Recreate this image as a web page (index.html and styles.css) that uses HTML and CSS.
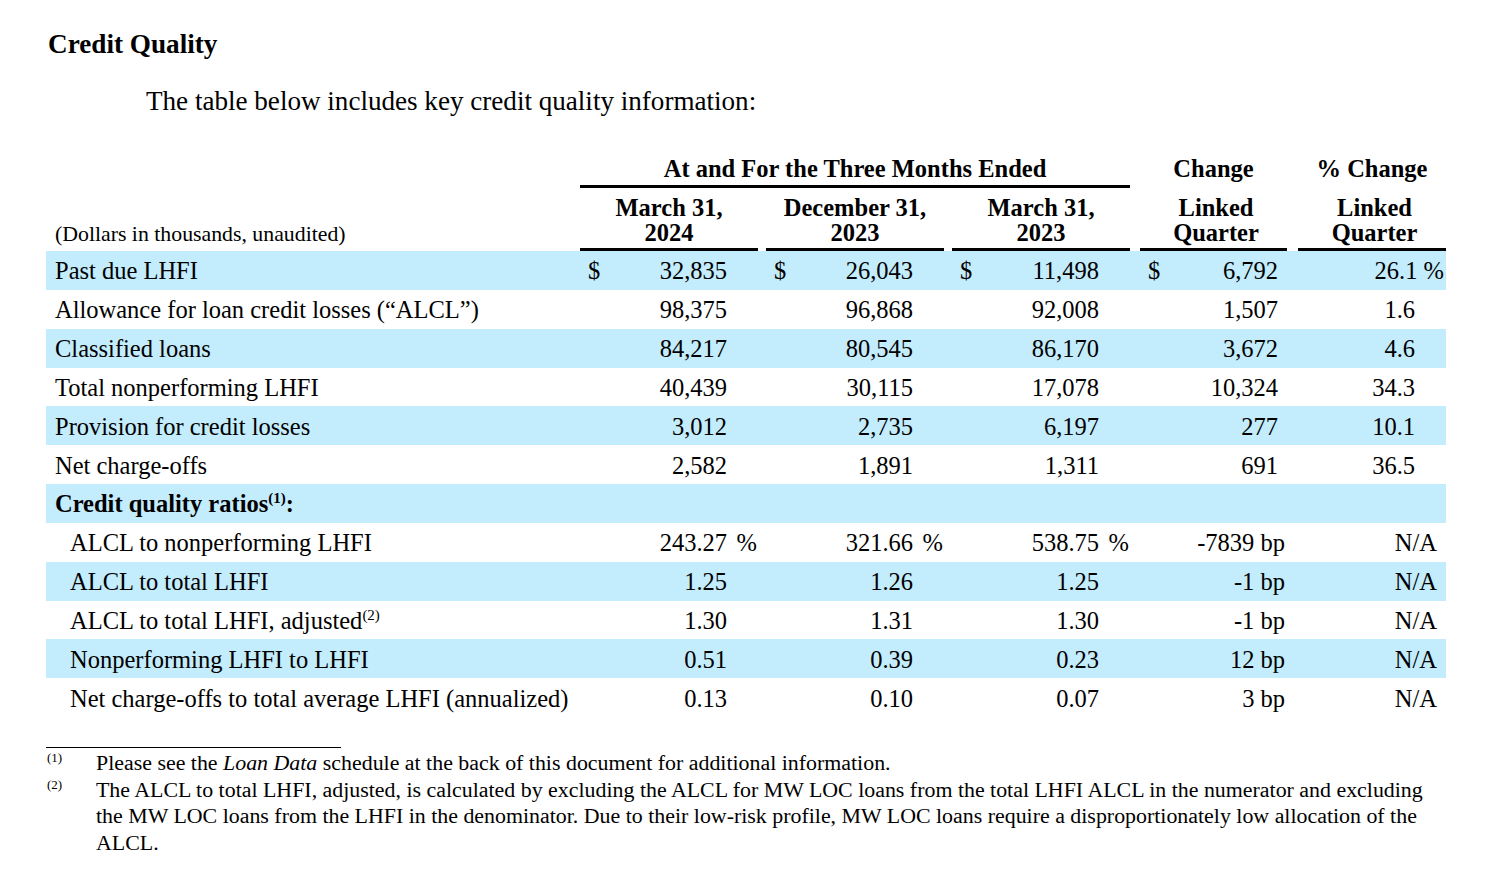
FILE: index.html
```html
<!DOCTYPE html>
<html lang="en">
<head>
<meta charset="utf-8">
<title>Credit Quality</title>
<link rel="stylesheet" href="styles.css">
</head>
<body>
<div class="page">
  <h1 class="title">Credit Quality</h1>
  <p class="intro">The table below includes key credit quality information:</p>

  <div class="table">
    <div class="row head1">
      <div class="h-group">At and For the Three Months Ended</div>
      <div class="h-plain c4">Change</div>
      <div class="h-plain c5">% Change</div>
    </div>
    <div class="row head2">
      <div class="lbl-units">(Dollars in thousands, unaudited)</div>
      <div class="h-col c1">March 31,<br>2024</div>
      <div class="h-col c2">December 31,<br>2023</div>
      <div class="h-col c3">March 31,<br>2023</div>
      <div class="h-col h-shift c4">Linked<br>Quarter</div>
      <div class="h-col h-shift c5">Linked<br>Quarter</div>
    </div>

    <div class="row data blue">
      <div class="lbl">Past due LHFI</div>
      <div class="val c1"><span class="cur">$</span><span class="num">32,835</span><span class="suf"></span></div>
      <div class="val c2"><span class="cur">$</span><span class="num">26,043</span><span class="suf"></span></div>
      <div class="val c3"><span class="cur">$</span><span class="num">11,498</span><span class="suf"></span></div>
      <div class="val c4"><span class="cur">$</span><span class="num">6,792</span><span class="suf s4"></span></div>
      <div class="val c5"><span class="num pct">26.1 %</span><span class="suf"></span></div>
    </div>
    <div class="row data">
      <div class="lbl">Allowance for loan credit losses (“ALCL”)</div>
      <div class="val c1"><span class="num">98,375</span><span class="suf"></span></div>
      <div class="val c2"><span class="num">96,868</span><span class="suf"></span></div>
      <div class="val c3"><span class="num">92,008</span><span class="suf"></span></div>
      <div class="val c4"><span class="num">1,507</span><span class="suf s4"></span></div>
      <div class="val c5"><span class="num">1.6</span><span class="suf"></span></div>
    </div>
    <div class="row data blue">
      <div class="lbl">Classified loans</div>
      <div class="val c1"><span class="num">84,217</span><span class="suf"></span></div>
      <div class="val c2"><span class="num">80,545</span><span class="suf"></span></div>
      <div class="val c3"><span class="num">86,170</span><span class="suf"></span></div>
      <div class="val c4"><span class="num">3,672</span><span class="suf s4"></span></div>
      <div class="val c5"><span class="num">4.6</span><span class="suf"></span></div>
    </div>
    <div class="row data">
      <div class="lbl">Total nonperforming LHFI</div>
      <div class="val c1"><span class="num">40,439</span><span class="suf"></span></div>
      <div class="val c2"><span class="num">30,115</span><span class="suf"></span></div>
      <div class="val c3"><span class="num">17,078</span><span class="suf"></span></div>
      <div class="val c4"><span class="num">10,324</span><span class="suf s4"></span></div>
      <div class="val c5"><span class="num">34.3</span><span class="suf"></span></div>
    </div>
    <div class="row data blue">
      <div class="lbl">Provision for credit losses</div>
      <div class="val c1"><span class="num">3,012</span><span class="suf"></span></div>
      <div class="val c2"><span class="num">2,735</span><span class="suf"></span></div>
      <div class="val c3"><span class="num">6,197</span><span class="suf"></span></div>
      <div class="val c4"><span class="num">277</span><span class="suf s4"></span></div>
      <div class="val c5"><span class="num">10.1</span><span class="suf"></span></div>
    </div>
    <div class="row data">
      <div class="lbl">Net charge-offs</div>
      <div class="val c1"><span class="num">2,582</span><span class="suf"></span></div>
      <div class="val c2"><span class="num">1,891</span><span class="suf"></span></div>
      <div class="val c3"><span class="num">1,311</span><span class="suf"></span></div>
      <div class="val c4"><span class="num">691</span><span class="suf s4"></span></div>
      <div class="val c5"><span class="num">36.5</span><span class="suf"></span></div>
    </div>
    <div class="row data blue">
      <div class="lbl bold">Credit quality ratios<sup>(1)</sup>:</div>
    </div>
    <div class="row data">
      <div class="lbl sub">ALCL to nonperforming LHFI</div>
      <div class="val c1"><span class="num">243.27</span><span class="suf">%</span></div>
      <div class="val c2"><span class="num">321.66</span><span class="suf">%</span></div>
      <div class="val c3"><span class="num">538.75</span><span class="suf">%</span></div>
      <div class="val c4"><span class="num bp">-7839 bp</span><span class="suf s4"></span></div>
      <div class="val c5"><span class="num na">N/A</span><span class="suf"></span></div>
    </div>
    <div class="row data blue">
      <div class="lbl sub">ALCL to total LHFI</div>
      <div class="val c1"><span class="num">1.25</span><span class="suf"></span></div>
      <div class="val c2"><span class="num">1.26</span><span class="suf"></span></div>
      <div class="val c3"><span class="num">1.25</span><span class="suf"></span></div>
      <div class="val c4"><span class="num bp">-1 bp</span><span class="suf s4"></span></div>
      <div class="val c5"><span class="num na">N/A</span><span class="suf"></span></div>
    </div>
    <div class="row data">
      <div class="lbl sub">ALCL to total LHFI, adjusted<sup>(2)</sup></div>
      <div class="val c1"><span class="num">1.30</span><span class="suf"></span></div>
      <div class="val c2"><span class="num">1.31</span><span class="suf"></span></div>
      <div class="val c3"><span class="num">1.30</span><span class="suf"></span></div>
      <div class="val c4"><span class="num bp">-1 bp</span><span class="suf s4"></span></div>
      <div class="val c5"><span class="num na">N/A</span><span class="suf"></span></div>
    </div>
    <div class="row data blue">
      <div class="lbl sub">Nonperforming LHFI to LHFI</div>
      <div class="val c1"><span class="num">0.51</span><span class="suf"></span></div>
      <div class="val c2"><span class="num">0.39</span><span class="suf"></span></div>
      <div class="val c3"><span class="num">0.23</span><span class="suf"></span></div>
      <div class="val c4"><span class="num bp">12 bp</span><span class="suf s4"></span></div>
      <div class="val c5"><span class="num na">N/A</span><span class="suf"></span></div>
    </div>
    <div class="row data">
      <div class="lbl sub">Net charge-offs to total average LHFI (annualized)</div>
      <div class="val c1"><span class="num">0.13</span><span class="suf"></span></div>
      <div class="val c2"><span class="num">0.10</span><span class="suf"></span></div>
      <div class="val c3"><span class="num">0.07</span><span class="suf"></span></div>
      <div class="val c4"><span class="num bp">3 bp</span><span class="suf s4"></span></div>
      <div class="val c5"><span class="num na">N/A</span><span class="suf"></span></div>
    </div>
  </div>

  <div class="notes">
    <div class="note-rule"></div>
    <div class="note">
      <span class="mark">(1)</span>
      <p class="note-text">Please see the <i>Loan Data</i> schedule at the back of this document for additional information.</p>
    </div>
    <div class="note">
      <span class="mark">(2)</span>
      <p class="note-text">The ALCL to total LHFI, adjusted, is calculated by excluding the ALCL for MW LOC loans from the total LHFI ALCL in the numerator and excluding the MW LOC loans from the LHFI in the denominator. Due to their low-risk profile, MW LOC loans require a disproportionately low allocation of the ALCL.</p>
    </div>
  </div>
</div>
</body>
</html>
```

FILE: styles.css
```css
* { box-sizing: border-box; }
html, body { margin: 0; padding: 0; background: #ffffff; }
body {
  font-family: "Liberation Serif", "Times New Roman", serif;
  color: #000;
}
.page {
  width: 1498px;
  padding: 30px 52px 0 46px;
}
.title {
  margin: 0 0 0 2px;
  font-size: 27.2px;
  line-height: 28px;
  font-weight: bold;
}
.intro {
  margin: 29px 0 0 100px;
  font-size: 27.1px;
  line-height: 28px;
}

.table { margin-top: 40px; width: 1400px; }
.row {
  display: grid;
  grid-template-columns: 534px 178px 8px 178px 8px 178px 10px 147px 11px 148px;
}
.c1 { grid-column: 2; }
.c2 { grid-column: 4; }
.c3 { grid-column: 6; }
.c4 { grid-column: 8; }
.c5 { grid-column: 10; }

.head1 { font-weight: bold; font-size: 24.5px; line-height: 28px; }
.h-group {
  grid-column: 2 / 7;
  text-align: center;
  border-bottom: 3px solid #000;
  padding-bottom: 2px;
}
.h-plain { text-align: center; }
.head2 { font-weight: bold; font-size: 24.5px; line-height: 25px; }
.h-col {
  text-align: center;
  padding-top: 7px;
  padding-bottom: 3px;
  border-bottom: 3px solid #000;
  white-space: nowrap;
}
.h-col.h-shift { padding-left: 5px; }
.lbl-units {
  grid-column: 1;
  align-self: end;
  font-size: 21.8px;
  line-height: 25px;
  font-weight: normal;
  padding-left: 9px;
  padding-bottom: 4px;
}

.data { height: 38.85px; font-size: 24.5px; align-items: center; padding-top: 2px; }
.blue { background: #c3ecfd; }
.lbl { grid-column: 1; padding-left: 9px; white-space: nowrap; }
.lbl.sub { padding-left: 24px; }
.lbl.bold { font-weight: bold; }
.lbl sup { font-size: 15px; line-height: 0; vertical-align: 9px; }

.val { display: flex; align-items: baseline; padding-left: 8px; white-space: nowrap; }
.cur { width: 20px; flex: none; }
.num { flex: 1; text-align: right; }
.suf { width: 31px; flex: none; text-align: right; padding-right: 1px; }
.suf.s4 { width: 9px; }
.num.bp { margin-right: -7px; }
.num.na { margin-right: -22px; }
.num.pct { margin-right: -29px; }

.notes { margin-top: 30px; font-size: 21.9px; }
.note-rule { width: 295px; border-top: 1px solid #000; margin-bottom: 2px; }
.note { display: flex; align-items: flex-start; }
.mark { width: 50px; flex: none; font-size: 13px; line-height: 16px; padding-left: 1px; }
.note-text { margin: 0; line-height: 26.5px; flex: 1; }
```
